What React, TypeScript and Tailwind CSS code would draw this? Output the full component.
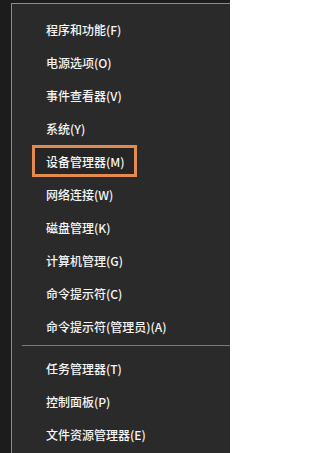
import React from "react";

const group1 = [
  "程序和功能(F)",
  "电源选项(O)",
  "事件查看器(V)",
  "系统(Y)",
  "设备管理器(M)",
  "网络连接(W)",
  "磁盘管理(K)",
  "计算机管理(G)",
  "命令提示符(C)",
  "命令提示符(管理员)(A)",
];
const group2 = ["任务管理器(T)", "控制面板(P)", "文件资源管理器(E)"];

function Item({ label, highlight }: { label: string; highlight?: boolean }) {
  return (
    <div className="relative flex h-[33px] items-center pl-[34px] text-[12px] font-medium leading-none text-[#f5f5f5]">
      {highlight && (
        <div className="absolute left-[20px] top-0 h-[32px] w-[105px] border-[3px] border-[#e38a4f] bg-[#252525]" />
      )}
      <span className="relative">{label}</span>
    </div>
  );
}

export default function App() {
  return (
    <div
      className="flex h-[453px] w-[230px] flex-col overflow-hidden bg-[#1c1c1c] pl-[11px] pt-[3px]"
      style={{ fontFamily: '"Noto Sans CJK SC", "Noto Sans", sans-serif' }}
    >
      <div className="flex flex-1 flex-col border-l border-t border-[#8c8c8c] bg-[#2a2a2a] pt-[9px]">
        {group1.map((l) => (
          <Item key={l} label={l} highlight={l === "设备管理器(M)"} />
        ))}
        <div className="ml-[10px] mb-[6px] mt-[2px] h-px bg-[#7a7a7a]" />
        {group2.map((l) => (
          <Item key={l} label={l} />
        ))}
      </div>
    </div>
  );
}
